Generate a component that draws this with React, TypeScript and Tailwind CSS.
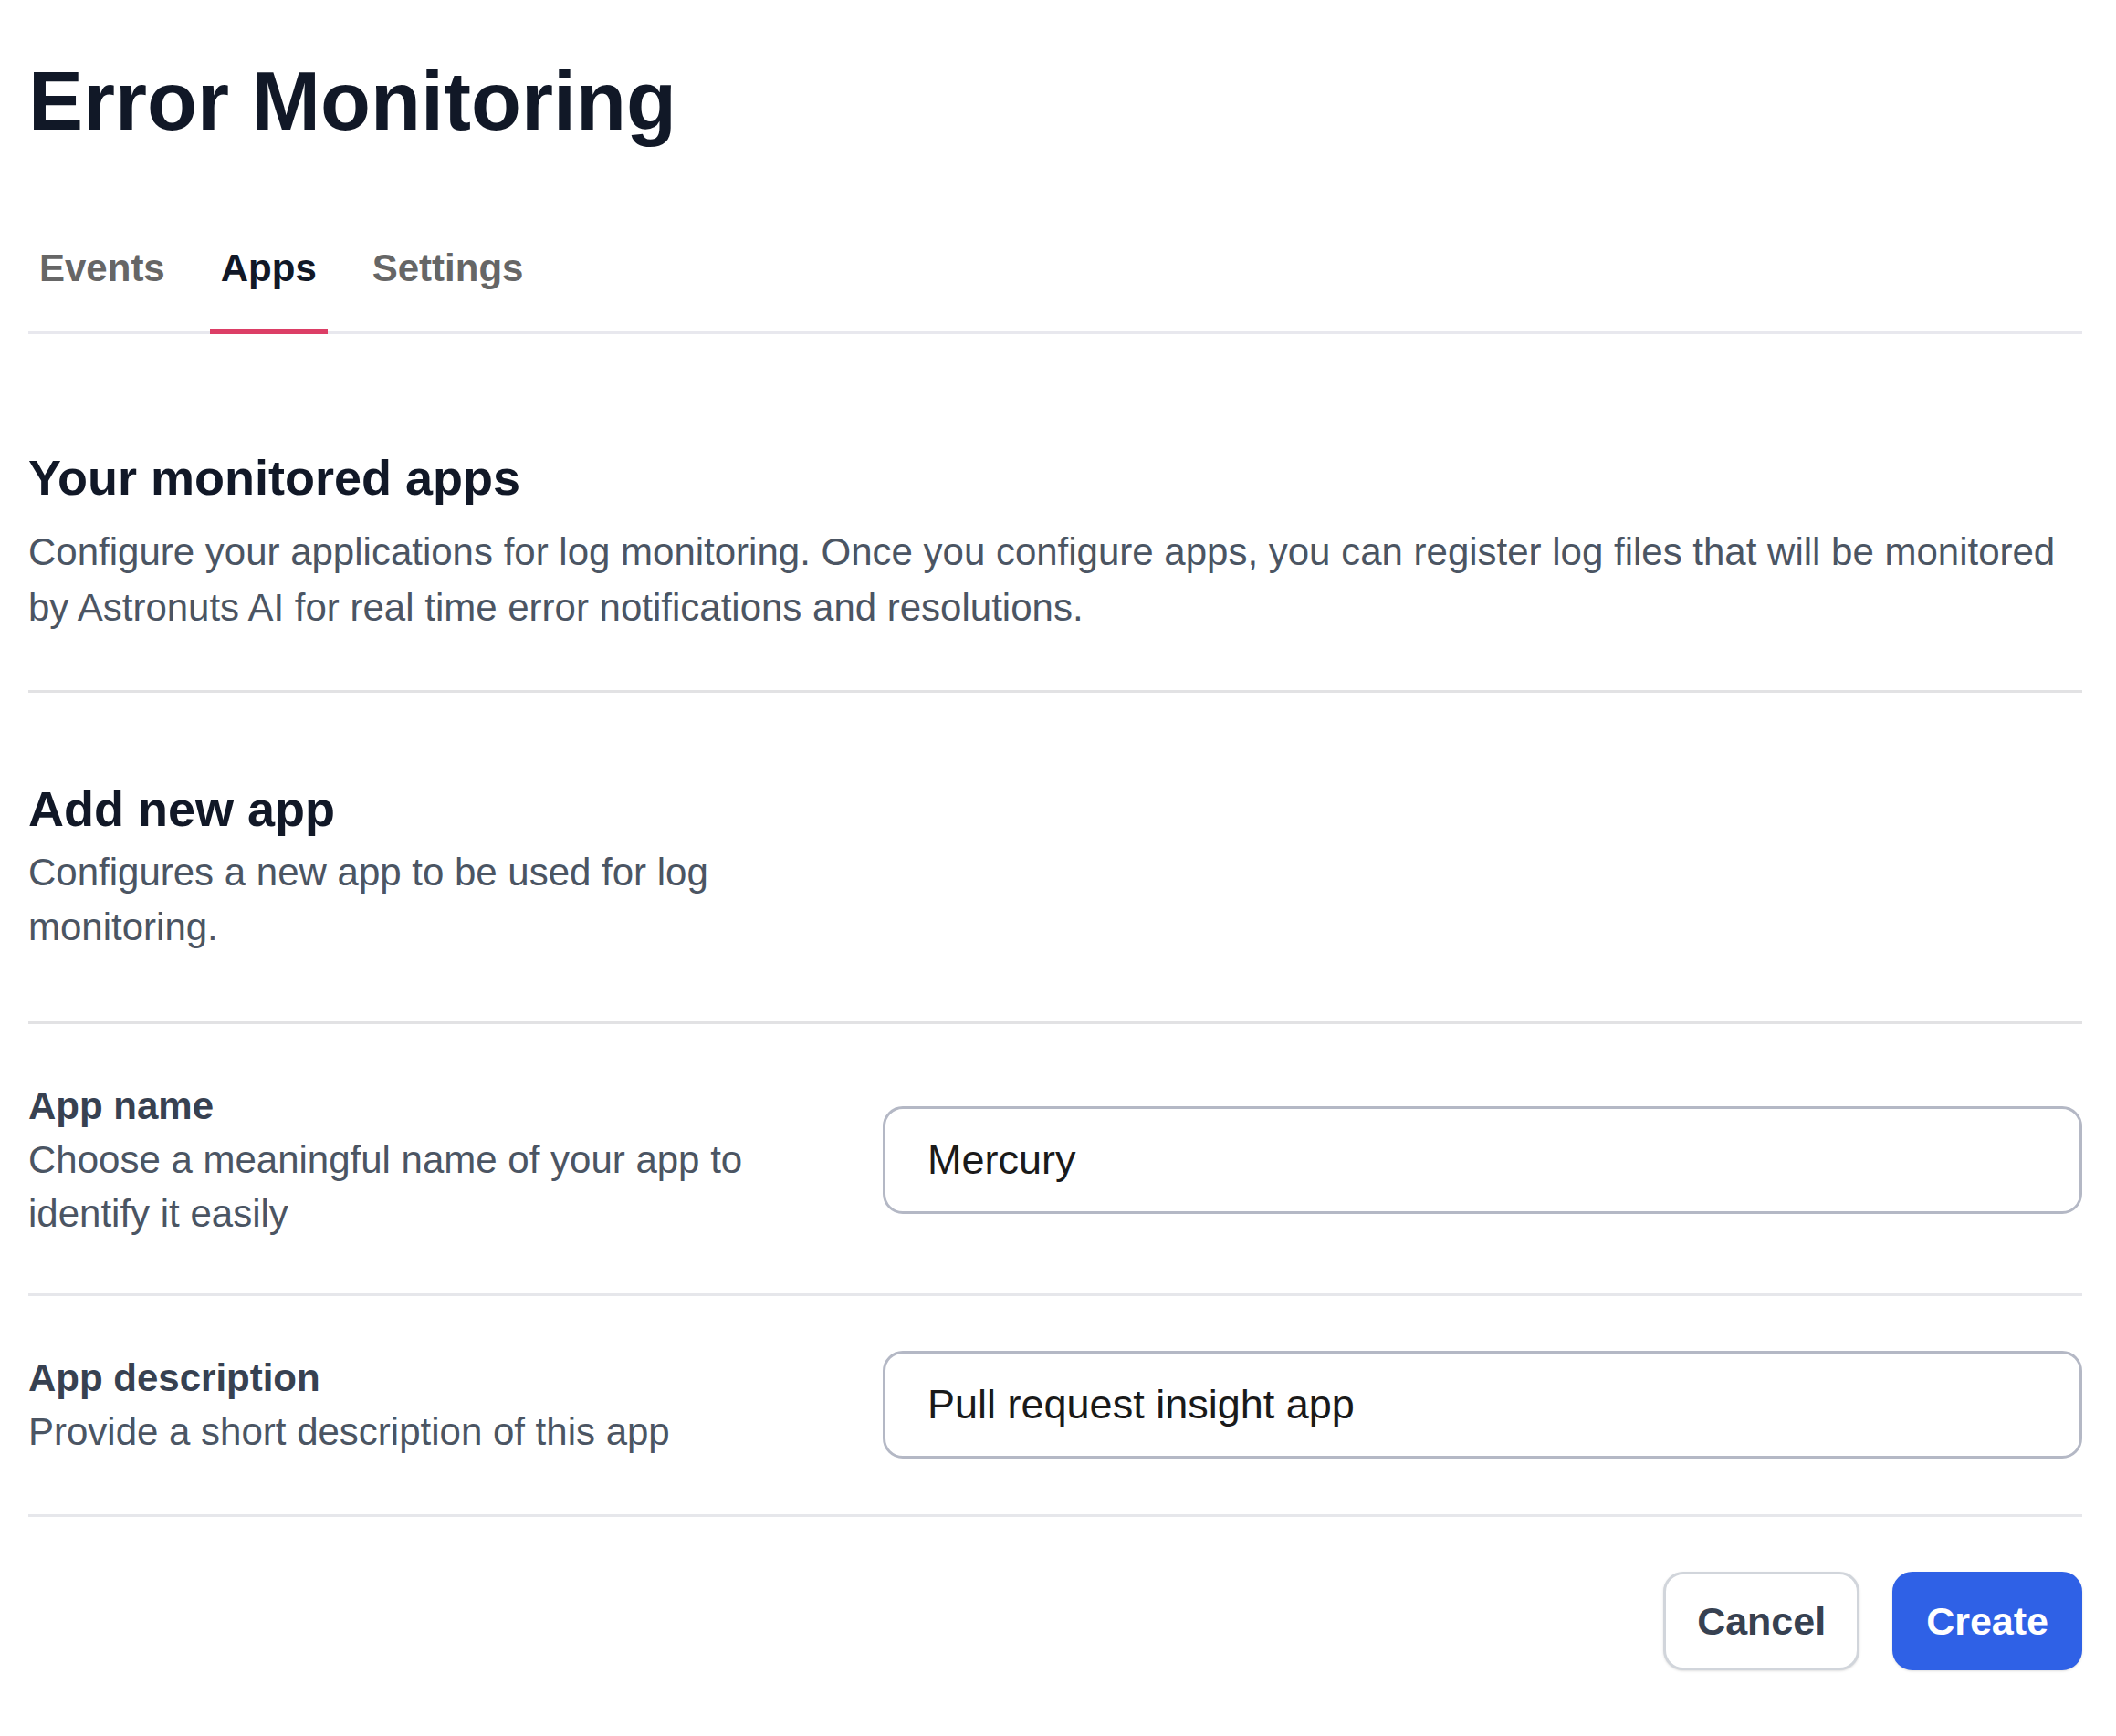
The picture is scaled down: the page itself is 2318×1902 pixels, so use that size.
const tabs = [
  { label: 'Events', active: false },
  { label: 'Apps', active: true },
  { label: 'Settings', active: false },
];

const FieldRow = ({
  label,
  hint,
  value,
  className,
}: {
  label: string;
  hint: string;
  value: string;
  className: string;
}) => {
  return (
    <div className={`flex items-center border-b-[3px] border-[#e6e7eb] ${className}`}>
      <div className="w-[936px] shrink-0">
        <div className="max-w-[870px] text-[42px] leading-[59px]">
          <div className="font-bold text-[#374151]">{label}</div>
          <div className="text-[#4b5563]">{hint}</div>
        </div>
      </div>
      <input
        type="text"
        defaultValue={value}
        className="h-[118px] w-full flex-1 rounded-[22px] border-[3px] border-[#b4b8c5] bg-white px-[46px] text-[45px] text-[#1a1a1a] outline-none"
      />
    </div>
  );
};

const App = () => {
  return (
    <div className="min-h-screen bg-white pl-[31px] pr-[37px] pt-[66px] font-['Liberation_Sans',Arial,sans-serif]">
      <h1 className="text-[90px] leading-[91px] font-bold text-[#111827]">Error Monitoring</h1>

      <nav className="mt-[107px] flex gap-[37px] border-b-[3px] border-[#e8e8ee]">
        {tabs.map((tab) => (
          <button
            key={tab.label}
            className={`-mb-[3px] border-b-[6px] px-[12px] pb-[36px] text-[42px] leading-[60px] font-bold ${
              tab.active ? 'border-[#dc3e66] text-[#111827]' : 'border-transparent text-[#666666]'
            }`}
          >
            {tab.label}
          </button>
        ))}
      </nav>

      <section className="border-b-[3px] border-[#e2e2e4] pt-[122px] pb-[60px]">
        <h2 className="text-[54px] leading-[70px] font-bold text-[#111827]">Your monitored apps</h2>
        <p className="mt-[16px] text-[42px] leading-[61px] text-[#4b5563]">
          Configure your applications for log monitoring. Once you configure apps, you can register log files that
          will be monitored by Astronuts AI for real time error notifications and resolutions.
        </p>
      </section>

      <section className="border-b-[3px] border-[#e2e2e4] pt-[92px] pb-[73px]">
        <h2 className="text-[54px] leading-[70px] font-bold text-[#111827]">Add new app</h2>
        <p className="mt-[5px] max-w-[870px] text-[42px] leading-[60px] text-[#4b5563]">
          Configures a new app to be used for log monitoring.
        </p>
      </section>

      <FieldRow
        label="App name"
        hint="Choose a meaningful name of your app to identify it easily"
        value="Mercury"
        className="pt-[60px] pb-[58px]"
      />
      <FieldRow
        label="App description"
        hint="Provide a short description of this app"
        value="Pull request insight app"
        className="pt-[60px] pb-[61px]"
      />

      <div className="flex justify-end gap-[36px] pt-[60px] pb-[70px]">
        <button className="flex h-[108px] items-center rounded-[22px] border-[3px] border-[#d1d5db] bg-white px-[34px] text-[43px] font-bold text-[#374151] shadow-sm">
          Cancel
        </button>
        <button className="flex h-[108px] items-center rounded-[22px] border-[3px] border-[#2f61e6] bg-[#2f61e6] px-[34px] text-[43px] font-bold text-white shadow-sm">
          Create
        </button>
      </div>
    </div>
  );
};

export default App;
